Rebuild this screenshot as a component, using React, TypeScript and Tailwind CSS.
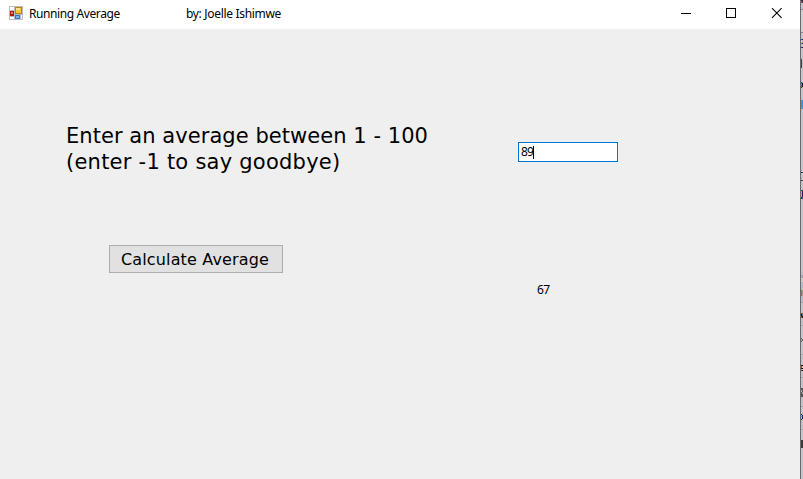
type Mark = { y: number; h: number; left: string; right: string };

// Edge of the window that lies behind this one
const marks: Mark[] = [
  { y: 0, h: 1, left: "#243044", right: "#3a3d50" },
  { y: 1, h: 2, left: "#b85a20", right: "#173e78" },
  { y: 9, h: 1, left: "#858995", right: "#858995" },
  { y: 32, h: 1, left: "#858995", right: "#858995" },
  { y: 39, h: 1, left: "#204c80", right: "#173e78" },
  { y: 42, h: 1, left: "#c5c8d0", right: "#b59a50" },
  { y: 43, h: 1, left: "#2874a8", right: "#404050" },
  { y: 47, h: 1, left: "#202060", right: "#302060" },
  { y: 59, h: 9, left: "#404040", right: "#c3c3cc" },
  { y: 82, h: 1, left: "#184870", right: "#b0b8c0" },
  { y: 83, h: 4, left: "#b86020", right: "#101830" },
  { y: 87, h: 1, left: "#184870", right: "#b0b8c0" },
  { y: 100, h: 9, left: "#b87a40", right: "#3b95d8" },
  { y: 172, h: 1, left: "#101010", right: "#306080" },
  { y: 180, h: 1, left: "#202020", right: "#606878" },
  { y: 190, h: 1, left: "#183060", right: "#306080" },
  { y: 191, h: 6, left: "#c5b860", right: "#401060" },
  { y: 197, h: 2, left: "#183060", right: "#306080" },
  { y: 275, h: 3, left: "#a5a5b0", right: "#a5a5b0" },
  { y: 278, h: 4, left: "#d0cfcf", right: "#d0cfcf" },
  { y: 290, h: 6, left: "#2890c8", right: "#b0a080" },
  { y: 302, h: 1, left: "#a5a8b5", right: "#a5a8b5" },
  { y: 313, h: 1, left: "#704020", right: "#8c7060" },
  { y: 314, h: 2, left: "#101010", right: "#4080a0" },
  { y: 316, h: 2, left: "#804820", right: "#101820" },
  { y: 325, h: 1, left: "#a5a8b5", right: "#a5a8b5" },
  { y: 338, h: 1, left: "#707070", right: "#c5c5cc" },
  { y: 339, h: 2, left: "#a0a0a0", right: "#707070" },
  { y: 341, h: 1, left: "#707070", right: "#c5c5cc" },
  { y: 354, h: 1, left: "#a5a8b5", right: "#a5a8b5" },
  { y: 365, h: 1, left: "#101010", right: "#101010" },
  { y: 366, h: 2, left: "#b86020", right: "#c3c3cc" },
  { y: 368, h: 1, left: "#101010", right: "#101010" },
  { y: 370, h: 1, left: "#704020", right: "#101010" },
  { y: 377, h: 1, left: "#a5a8b5", right: "#a5a8b5" },
  { y: 388, h: 2, left: "#505050", right: "#505050" },
  { y: 390, h: 2, left: "#b0b0b0", right: "#606060" },
  { y: 392, h: 2, left: "#606060", right: "#a0a0a0" },
  { y: 394, h: 3, left: "#505050", right: "#505050" },
  { y: 406, h: 1, left: "#a5a8b5", right: "#a5a8b5" },
  { y: 414, h: 1, left: "#183060", right: "#c3c3cc" },
  { y: 415, h: 4, left: "#a0a8c8", right: "#102878" },
  { y: 419, h: 1, left: "#183060", right: "#c3c3cc" },
  { y: 429, h: 1, left: "#a5a8b5", right: "#a5a8b5" },
  { y: 440, h: 8, left: "#3c3c3c", right: "#3c3c3c" },
];

function AppIcon() {
  return (
    <svg width="14" height="14" viewBox="0 0 14 14" shapeRendering="crispEdges" className="shrink-0">
      <path fill="#bdbdbd" d="M0 0h14v14H0z" />
      <path fill="#fff" d="M1 1h4v3H1zM1 11h4v2H1zM12 9h1v4h-1z" />
      <path fill="#a51c16" d="M1 5h4v5H1z" />
      <path fill="#e77b6a" d="M2 6h2v2H2z" />
      <path fill="#b78312" d="M6 1h7v7H6z" />
      <path fill="#f4c83a" d="M7 2h5v5H7z" />
      <path fill="#ffe38c" d="M7 2h4v2H7z" />
      <path fill="#3f73c8" d="M6 9h5v4H6z" />
      <path fill="#80adf0" d="M7 10h3v2H7z" />
    </svg>
  );
}

function TitleBar() {
  return (
    <header className="flex h-[29px] shrink-0 items-start bg-white">
      <div className="pt-1.5 pl-[9px]">
        <AppIcon />
      </div>
      <h1 className="ml-1.5 w-[157px] pt-[5px] font-['Noto_Sans',sans-serif] text-[12px] leading-[18px] tracking-[-0.4px] whitespace-nowrap">
        Running Average
      </h1>
      <span className="pt-[5px] font-['Noto_Sans',sans-serif] text-[12px] leading-[18px] tracking-[-0.32px] whitespace-nowrap">
        by: Joelle Ishimwe
      </span>
      <div className="ml-auto flex pt-2 pr-[17px]">
        <svg width="102" height="11" viewBox="0 0 102 11" fill="none" stroke="#000">
          <path d="M0 5.5h10M45.500 .5h9v9h-9z" shapeRendering="crispEdges" />
          <path d="M91 .2l9.600 9.600M100.600 .2L91 9.800" strokeWidth="1.100" />
        </svg>
      </div>
    </header>
  );
}

function BackgroundEdge() {
  return (
    <aside className="flex w-[3px] shrink-0 bg-[#c3c3cc]">
      <div className="w-px bg-[#6a6a6c]" />
      <svg width="2" height="479" viewBox="0 0 2 479" shapeRendering="crispEdges">
        <path fill="#d0d0d2" d="M0 10h2v22h-2z" />
        <path fill="#b4bccb" d="M0 282h2v20h-2z" />
        {marks.map((m) => (
          <g key={m.y}>
            <rect x="0" y={m.y} width="1" height={m.h} fill={m.left} />
            <rect x="1" y={m.y} width="1" height={m.h} fill={m.right} />
          </g>
        ))}
      </svg>
    </aside>
  );
}

export default function App() {
  return (
    <div className="flex h-[479px] w-[803px] overflow-hidden text-black">
      <section className="flex w-[800px] shrink-0 flex-col bg-[#efefef]">
        <TitleBar />
        <main className="flex items-start">
          <div className="w-[518px] pt-[94px]">
            <p className="ml-[66px] font-['DejaVu_Sans',sans-serif] text-[21px] leading-[26px] whitespace-nowrap">
              <span className="tracking-[0.05px]">Enter an average between 1 - 100</span>
              <br />
              <span className="tracking-[0.24px]">(enter -1 to say goodbye)</span>
            </p>
            <button className="mt-[70px] ml-[109px] flex h-7 w-[174px] items-center justify-center border border-[#adadad] bg-[#e1e1e1] pt-px pr-0.5 font-['DejaVu_Sans',sans-serif] text-[16px] leading-[20px] tracking-[0.16px] whitespace-nowrap">
              Calculate Average
            </button>
          </div>
          <div className="pt-[113px] font-['Noto_Sans',sans-serif] text-[12px]">
            <div className="flex h-5 w-[100px] items-center border border-[#0078d7] bg-white pl-0.5">
              <span className="leading-[18px] tracking-[-0.86px]">89</span>
              <span className="h-[13px] w-px bg-black" />
            </div>
            <output className="mt-[119px] ml-[19px] block leading-[18px] tracking-[-0.7px]">67</output>
          </div>
        </main>
      </section>
      <BackgroundEdge />
    </div>
  );
}
